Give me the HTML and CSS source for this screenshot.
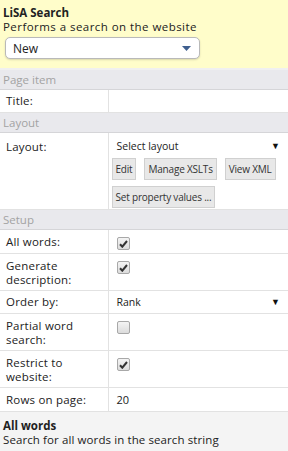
FILE: index.html
```html
<!DOCTYPE html>
<html>
  <head>
    <title>LiSA Search</title>
    <link rel="stylesheet" href="styles.css">
  </head>
  <body>
    <div class="head">
      <div class="head-title">LiSA Search</div>
      <div class="head-desc">Performs a search on the website</div>
      <div class="combo">
        <span>New</span>
        <svg class="combo-arrow" width="9" height="5" viewBox="0 0 9 5"><path d="M0 0h9L4.5 5z" fill="#3f5f8f"/></svg>
      </div>
    </div>
    <table class="props">
      <colgroup>
        <col class="col-label">
        <col>
      </colgroup>
      <tr class="section"><td colspan="2">Page item</td></tr>
      <tr class="row-input">
        <td class="label">Title:</td>
        <td class="value"></td>
      </tr>
      <tr class="section"><td colspan="2">Layout</td></tr>
      <tr>
        <td class="label layout-label">Layout:</td>
        <td class="value layout-value">
          <div class="select"><span>Select layout</span><span class="arrow">&#9660;</span></div>
          <div class="buttons">
            <span class="btn">Edit</span>
            <span class="btn">Manage XSLTs</span>
            <span class="btn">View XML</span>
          </div>
          <div class="buttons">
            <span class="btn">Set property values ...</span>
          </div>
        </td>
      </tr>
      <tr class="section"><td colspan="2">Setup</td></tr>
      <tr class="row-check">
        <td class="label">All words:</td>
        <td class="value"><span class="check"><svg width="9" height="8" viewBox="0 0 9 8"><path d="M1 4.2l2.3 2.5L8 1" fill="none" stroke="#333" stroke-width="2"/></svg></span></td>
      </tr>
      <tr class="row-check">
        <td class="label">Generate description:</td>
        <td class="value"><span class="check"><svg width="9" height="8" viewBox="0 0 9 8"><path d="M1 4.2l2.3 2.5L8 1" fill="none" stroke="#333" stroke-width="2"/></svg></span></td>
      </tr>
      <tr class="row-input">
        <td class="label">Order by:</td>
        <td class="value"><div class="select"><span>Rank</span><span class="arrow">&#9660;</span></div></td>
      </tr>
      <tr class="row-check">
        <td class="label">Partial word search:</td>
        <td class="value"><span class="check"></span></td>
      </tr>
      <tr class="row-check">
        <td class="label">Restrict to website:</td>
        <td class="value"><span class="check"><svg width="9" height="8" viewBox="0 0 9 8"><path d="M1 4.2l2.3 2.5L8 1" fill="none" stroke="#333" stroke-width="2"/></svg></span></td>
      </tr>
      <tr class="row-input last">
        <td class="label">Rows on page:</td>
        <td class="value"><span class="plain">20</span></td>
      </tr>
    </table>
    <div class="help">
      <div class="help-title">All words</div>
      <div class="help-desc">Search for all words in the search string</div>
    </div>
  </body>
</html>
```
FILE: styles.css
```css
body {
  margin: 0;
  width: 288px;
  height: 451px;
  overflow: hidden;
  font-family: "Open Sans", "Noto Sans", sans-serif;
  font-size: 11.5px;
  color: #222;
  background: #f4f4f4;
}

.head {
  background: #fffdca;
  padding: 5px 3px 9px 3px;
  border-bottom: 2px solid #f0f0f0;
}
.head-title {
  font-weight: bold;
  font-size: 11.5px;
  line-height: 15px;
}
.head-desc {
  font-size: 11.5px;
  letter-spacing: 0.45px;
  line-height: 14px;
}
.combo {
  box-sizing: border-box;
  margin: 3px 0 0 2px;
  width: 195px;
  height: 22px;
  border: 1px solid #b9b9b9;
  border-radius: 5px;
  background: #fff;
  box-shadow: 0 1px 2px rgba(0, 0, 0, 0.15);
  display: flex;
  align-items: center;
  justify-content: space-between;
  padding: 0 8px 0 7px;
  font-size: 12px;
}

.props {
  width: 100%;
  table-layout: fixed;
  border-collapse: collapse;
  background: #fff;
}
.col-label {
  width: 108px;
}
.props td {
  border-bottom: 1px solid #e2e2e2;
  vertical-align: top;
  line-height: 14px;
}
.section td {
  background: #e9e9ed;
  color: #a3a3a3;
  height: 19px;
  padding: 0 3px;
  vertical-align: middle;
  border-bottom: 1px solid #d5d5d8;
}
.label {
  padding: 0 5px 0 6px;
  border-right: 1px solid #e2e2e2;
  letter-spacing: 0.2px;
}
.value {
  padding: 0 4px 0 3px;
}
.row-input td {
  height: 22px;
  vertical-align: middle;
}
.row-input.last td {
  height: 23px;
}
.row-check td {
  padding-top: 5px;
  padding-bottom: 3px;
}
.layout-label {
  padding-top: 7px;
}
.layout-value {
  padding-top: 6px;
  padding-bottom: 1px;
}

.select {
  display: flex;
  justify-content: space-between;
  font-size: 10.5px;
  padding-left: 5px;
  padding-right: 4px;
}
.select .arrow {
  font-size: 9px;
  color: #111;
}
.plain {
  font-size: 11px;
  padding-left: 5px;
}

.buttons {
  display: flex;
  gap: 8px;
  margin-top: 5px;
}
.buttons + .buttons {
  margin-top: 6px;
}
.btn {
  white-space: nowrap;
  font-size: 10px;
  letter-spacing: -0.2px;
  line-height: 20px;
  padding: 0 3px;
  background: #e8e8e8;
  border: 1px solid #d0d0d0;
  color: #333;
}

.check {
  display: inline-block;
  vertical-align: top;
  width: 11px;
  height: 11px;
  margin: 2px 0 0 5px;
  border: 1px solid #a8a8a8;
  border-radius: 2px;
  background: linear-gradient(#f4f4f4, #dcdcdc);
  position: relative;
}
.check svg {
  position: absolute;
  left: 1px;
  top: 2px;
}

.help {
  padding: 6px 3px;
}
.help-title {
  font-weight: bold;
  line-height: 15px;
}
.help-desc {
  font-size: 11.5px;
  letter-spacing: 0.1px;
  line-height: 14px;
}
```
